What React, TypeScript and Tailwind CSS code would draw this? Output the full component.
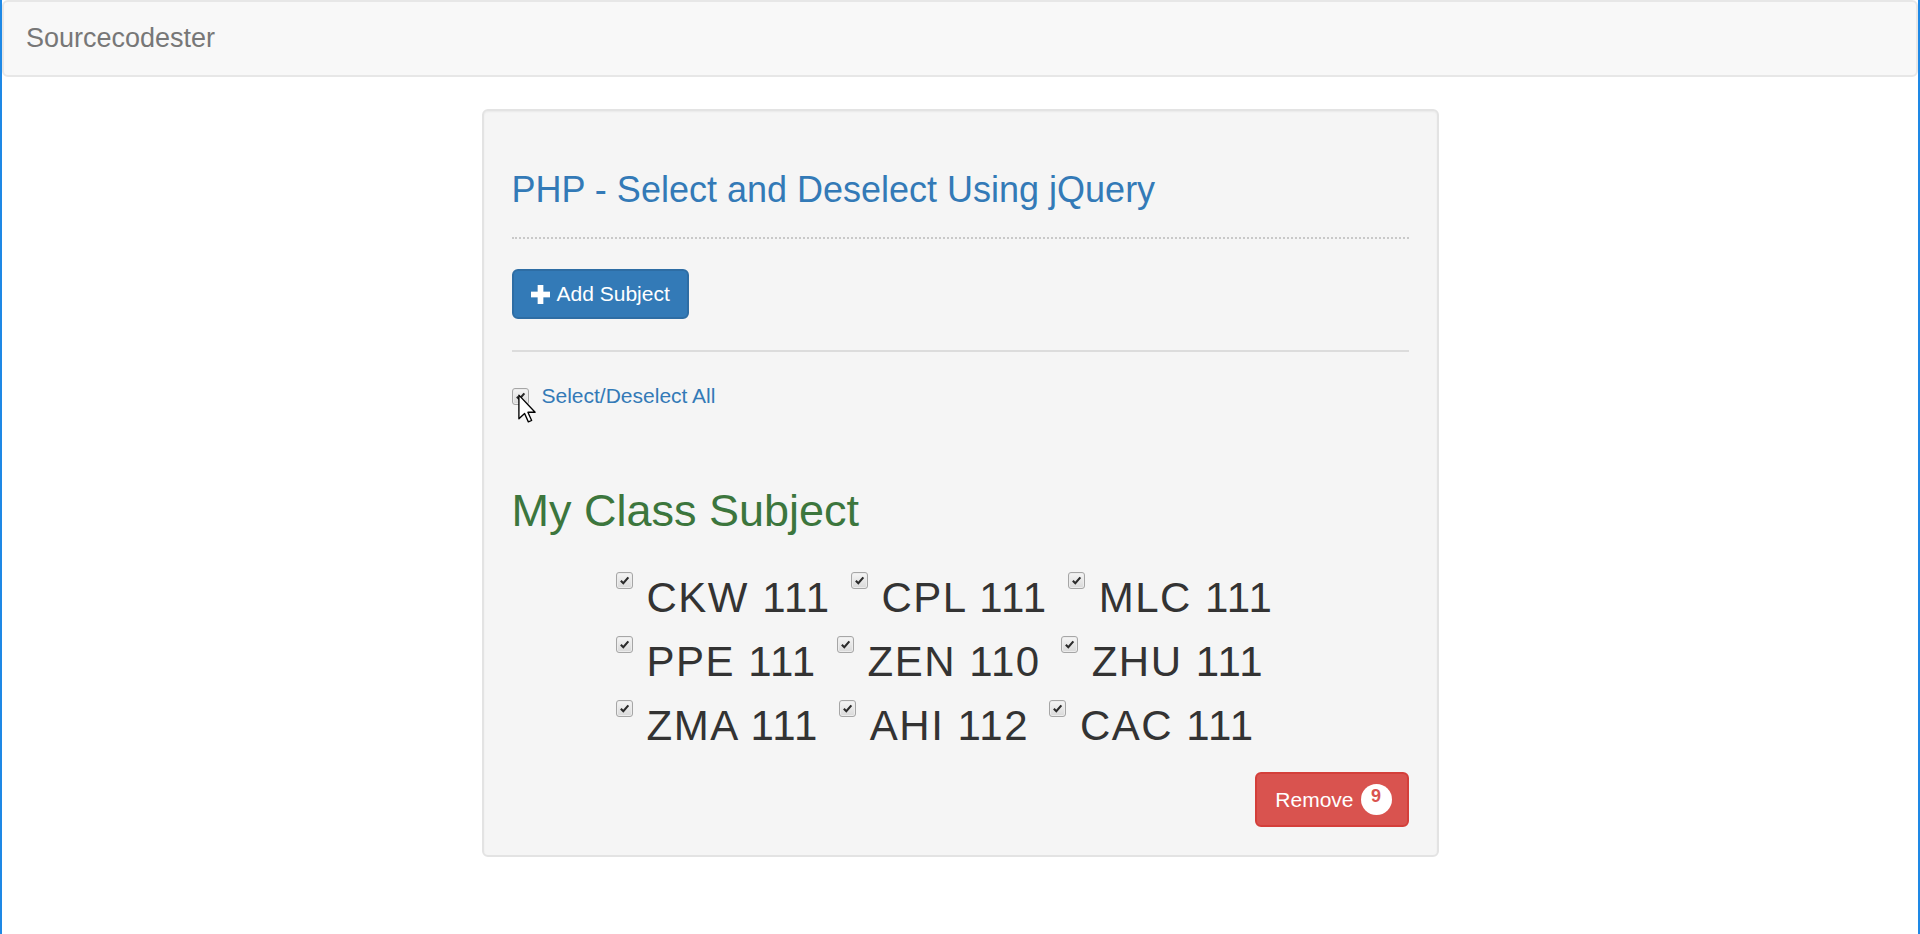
import React, { useState } from 'react';

const subjects = [
  'CKW 111', 'CPL 111', 'MLC 111',
  'PPE 111', 'ZEN 110', 'ZHU 111',
  'ZMA 111', 'AHI 112', 'CAC 111',
];

// Grey native-looking checkbox
const Check = ({ className = '' }: { className?: string }) => (
  <span
    className={`flex h-[17px] w-[17px] shrink-0 items-center justify-center rounded-[3px] border border-[#a6a6a6] bg-linear-to-b from-[#f6f6f6] to-[#d9d9d9] shadow-[inset_0_0_0_1px_#ececec] ${className}`}
  >
    <svg viewBox="0 0 12 12" className="h-[11px] w-[11px]">
      <path d="M2 6.3 L4.7 9 L10.2 2.6" fill="none" stroke="#2b2b2b" strokeWidth="2.3" />
    </svg>
  </span>
);

export default function App() {
  const [checked] = useState(subjects);

  return (
    <div className="min-h-[934px] border-x-2 border-[#1e88e5] bg-white font-['Liberation_Sans',Arial,Helvetica,sans-serif]">
      {/* Navbar */}
      <nav className="flex h-[77px] items-center rounded-[6px] border-2 border-[#e7e7e7] bg-[#f8f8f8] pl-[22px]">
        <span className="text-[27px] text-[#777]">Sourcecodester</span>
      </nav>

      {/* Well */}
      <div className="mx-auto mt-[32px] w-[957px] rounded-[6px] border-2 border-[#e3e3e3] bg-[#f5f5f5] px-[28px] pb-[28px] pt-[28px] shadow-[inset_0_1px_2px_rgba(0,0,0,0.05)]">
        <div className="mt-[31px] border-b-2 border-dotted border-[#c9c9c9] pb-[27px]">
          <h3 className="text-[36px] leading-[40px] text-[#337ab7]">PHP - Select and Deselect Using jQuery</h3>
        </div>

        <button className="mt-[30px] inline-flex h-[50px] items-center gap-[7px] rounded-[6px] border-2 border-[#2e6da4] bg-[#337ab7] px-[17px] text-[21px] text-white">
          <svg viewBox="0 0 20 20" className="h-[19px] w-[19px]">
            <rect x="7" y="0" width="6" height="20" fill="#fff" />
            <rect x="0" y="7" width="20" height="6" fill="#fff" />
          </svg>
          Add Subject
        </button>

        <div className="mt-[31px] h-[2px] bg-[#dcdcdc]" />

        <div className="relative mt-[29px] flex items-start">
          <Check className="mt-[7px]" />
          <span className="ml-[13px] text-[21px] leading-[30px] text-[#337ab7]">Select/Deselect All</span>
          {/* mouse pointer */}
          <svg viewBox="0 0 12 19" className="absolute left-[6px] top-[13px] h-[29px] w-[18px]">
            <path
              d="M0.6 0.6 L0.6 16.4 L4.4 12.8 L6.9 18.4 L9.1 17.5 L6.6 12 L11.4 12 Z"
              fill="#fff"
              stroke="#000"
              strokeWidth="0.9"
              strokeLinejoin="round"
            />
          </svg>
        </div>

        <h2 className="mt-[75px] text-[45px] leading-[50px] text-[#3c763d]">My Class Subject</h2>

        <div className="ml-[104px] mt-[30px] flex w-[720px] flex-wrap gap-x-[20px]">
          {checked.map((s) => (
            <label key={s} className="flex items-start">
              <Check className="mt-[6px]" />
              <span className="ml-[14px] text-[42px] leading-[64px] tracking-[1.5px] text-[#333]">{s}</span>
            </label>
          ))}
        </div>

        <div className="mt-[14px] flex justify-end">
          <button className="inline-flex h-[55px] items-center gap-[7px] rounded-[6px] border-2 border-[#d43f3a] bg-[#d9534f] pl-[18px] pr-[15px] text-[21px] text-white">
            Remove
            <span className="flex h-[31px] w-[31px] justify-center rounded-full bg-white pt-[1px] text-[18px] font-bold leading-[22px] text-[#d9534f]">
              9
            </span>
          </button>
        </div>
      </div>
    </div>
  );
}
